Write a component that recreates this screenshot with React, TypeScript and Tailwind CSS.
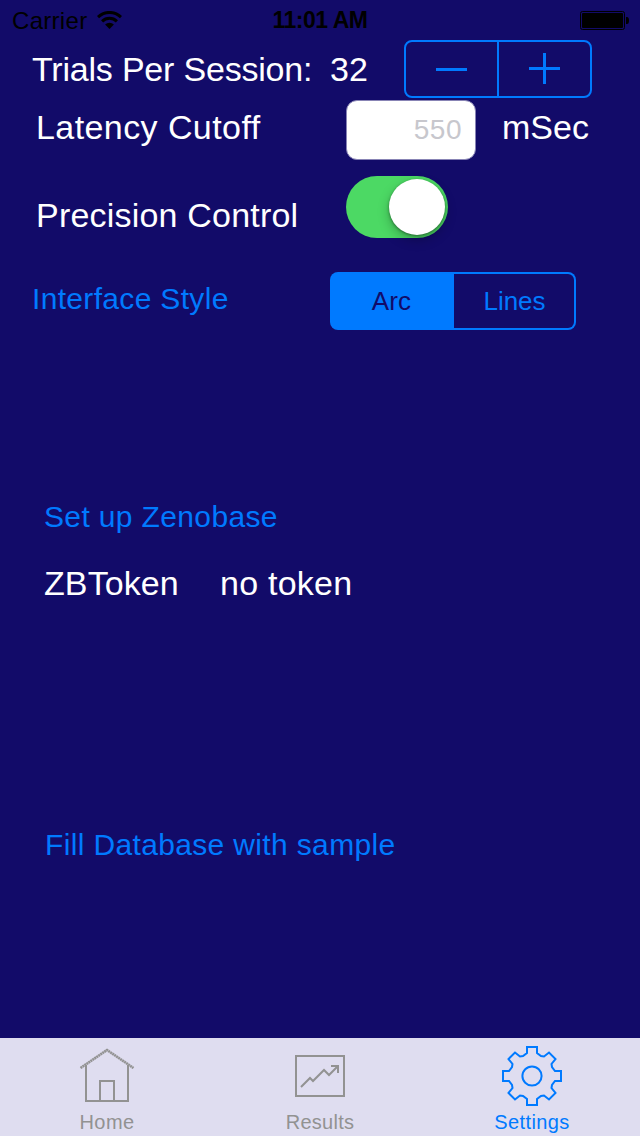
import React from "react";

const label = "text-[34px] text-white whitespace-pre";
const link = "text-[30px] text-[#007aff] whitespace-pre text-left";

function Wifi() {
  return (
    <svg className="ml-[10px] mt-[11px] h-[18px] w-[25px]" viewBox="0 0 25 18">
      <g fill="none" stroke="#000" strokeWidth="3">
        <path d="M1 6.1 A16.5 16.5 0 0 1 24 6.1" />
        <path d="M5.1 10.4 A10.5 10.5 0 0 1 19.9 10.4" />
      </g>
      <path d="M12.5 18 L8.1 13.5 A6.4 6.4 0 0 1 16.9 13.5 Z" />
    </svg>
  );
}

function StatusBar() {
  return (
    <header className="grid h-10 grid-cols-3 text-[24px] leading-[41px] text-black">
      <div className="flex pl-[12px]">
        <span className="tracking-[0.3px]">Carrier</span>
        <Wifi />
      </div>
      <div className="text-center text-[23px] font-bold tracking-[-0.5px] whitespace-nowrap">11:01 AM</div>
      <div className="flex justify-end pr-[11px]">
        <svg className="mt-[11px] h-[19px] w-[49px]" viewBox="0 0 49 19">
          <rect x="0.5" y="0.5" width="44" height="18" rx="2" fill="none" stroke="#000" />
          <rect x="2" y="2" width="41" height="15" rx="1" />
          <path d="M46 6 h1 q2 0 2 3.5 t-2 3.5 h-1 z" />
        </svg>
      </div>
    </header>
  );
}

function Stepper() {
  return (
    <div className="ml-auto mr-12 flex h-[58px] w-[188px] rounded-[8px] border-2 border-[#007aff]">
      <button className="flex w-[93px] items-center justify-center border-r-2 border-[#007aff]">
        <span className="h-[3px] w-[31px] bg-[#007aff]" />
      </button>
      <button className="flex flex-1 items-center justify-center pb-[2px]">
        <svg className="h-[31px] w-[31px]" viewBox="0 0 31 31">
          <path d="M0 15.5 H31 M15.5 0 V31" stroke="#007aff" strokeWidth="3" />
        </svg>
      </button>
    </div>
  );
}

function HomeIcon() {
  return (
    <svg className="h-[60px] w-[60px] shrink-0" viewBox="0 0 60 60" fill="none" stroke="#929292" strokeWidth="2">
      <path d="M3.5 22 L30 4 L56.5 22" strokeWidth="2.6" strokeDasharray="2 0.4" />
      <path d="M9 19 V55 H51 V19 M23 55 V35 H37 V55" />
    </svg>
  );
}

function ResultsIcon() {
  return (
    <svg className="h-[60px] w-[60px] shrink-0" viewBox="0 0 60 60" fill="none" stroke="#929292" strokeWidth="2">
      <rect x="6" y="10" width="48" height="40" />
      <path d="M11 41 L20 32 L23 35 L34 24 L39 29 L48 20 M41 20 H48 V27" />
    </svg>
  );
}

function GearIcon() {
  return (
    <svg className="h-[60px] w-[60px] shrink-0" viewBox="-30 -30 60 60" fill="none" stroke="#007aff" strokeWidth="2">
      <circle r="9.6" />
      <path d="M-5 -29 H5 V-23 L9 -20 L12 -19.5 L17 -23.5 L23.5 -17 L19.5 -12 L20 -9 L23 -5 H29 V5 H23 L20 9 L19.5 12 L23.5 17 L17 23.5 L12 19.5 L9 20 L5 23 V29 H-5 V23 L-9 20 L-12 19.5 L-17 23.5 L-23.5 17 L-19.5 12 L-20 9 L-23 5 H-29 V-5 H-23 L-20 -9 L-19.5 -12 L-23.5 -17 L-17 -23.5 L-12 -19.5 L-9 -20 L-5 -23 Z" />
    </svg>
  );
}

export default function App() {
  return (
    <div
      className="flex h-[1136px] w-[640px] flex-col overflow-hidden bg-[#120b69]"
      style={{ fontFamily: '"Liberation Sans", Arial, sans-serif' }}
    >
      <StatusBar />
      <main className="flex flex-1 flex-col">
        <div className="flex h-[60px] items-start leading-[58px]">
          <span className={`${label} w-[299px] pl-[32px] tracking-[-0.2px]`}>Trials Per Session:</span>
          <span className={`${label} pl-[31px]`}>32</span>
          <Stepper />
        </div>
        <div className="flex h-[76px] items-start">
          <span className={`${label} w-[346px] pl-[36px] leading-[54px] tracking-[0.42px]`}>Latency Cutoff</span>
          <input
            className="h-[60px] w-[130px] rounded-[11px] border border-[#8884b5] bg-white pr-[13px] text-right text-[28px] tracking-[0.5px] placeholder:text-[#c7c7cd] placeholder:opacity-100"
            placeholder="550"
          />
          <span className={`${label} pl-[26px] leading-[54px]`}>mSec</span>
        </div>
        <div className="flex h-24 items-start">
          <span className={`${label} w-[346px] pl-[36px] leading-[78px] tracking-[0.2px]`}>Precision Control</span>
          <div className="flex h-[62px] w-[102px] justify-end rounded-full bg-[#4cd964] p-[3px]">
            <div className="h-14 w-14 rounded-full bg-white shadow-[0_5px_12px_rgba(0,0,0,0.25),0_1px_3px_rgba(0,0,0,0.4)]" />
          </div>
        </div>
        <div className="flex h-[218px] items-start">
          <button className={`${link} w-[330px] pl-[32px] leading-[54px] tracking-[0.33px]`}>Interface Style</button>
          <div className="flex h-[58px] w-[246px] rounded-[8px] bg-[#007aff] p-[2px] text-[26px] leading-[54px]">
            <button className="w-[122px] pr-[3px] tracking-[0.2px] text-[#120b69]">Arc</button>
            <button className="flex-1 rounded-r-[6px] bg-[#120b69] pl-[1px] text-[#007aff]">Lines</button>
          </div>
        </div>
        <button className={`${link} mb-[6px] h-[54px] pl-[44px] leading-[54px] tracking-[0.36px]`}>Set up Zenobase</button>
        <div className="flex h-[268px] leading-[66px]">
          <span className={`${label} w-[220px] pl-[44px] tracking-[0.1px]`}>ZBToken</span>
          <span className={`${label} tracking-[0.25px]`}>no token</span>
        </div>
        <button className={`${link} h-[54px] pl-[45px] leading-[54px] tracking-[0.35px]`}>Fill Database with sample</button>
      </main>
      <nav className="flex h-[98px] bg-[#dfddf0] pl-[2px] pt-[8px] text-[20px] leading-[32px] text-[#929292]">
        <button className="flex h-[92px] w-[210px] flex-col items-center tracking-[0.4px]">
          <HomeIcon />
          Home
        </button>
        <button className="flex h-[92px] w-[216px] flex-col items-center tracking-[0.25px]">
          <ResultsIcon />
          Results
        </button>
        <button className="flex h-[92px] w-[208px] flex-col items-center tracking-[0.4px] text-[#007aff]">
          <GearIcon />
          Settings
        </button>
      </nav>
    </div>
  );
}
